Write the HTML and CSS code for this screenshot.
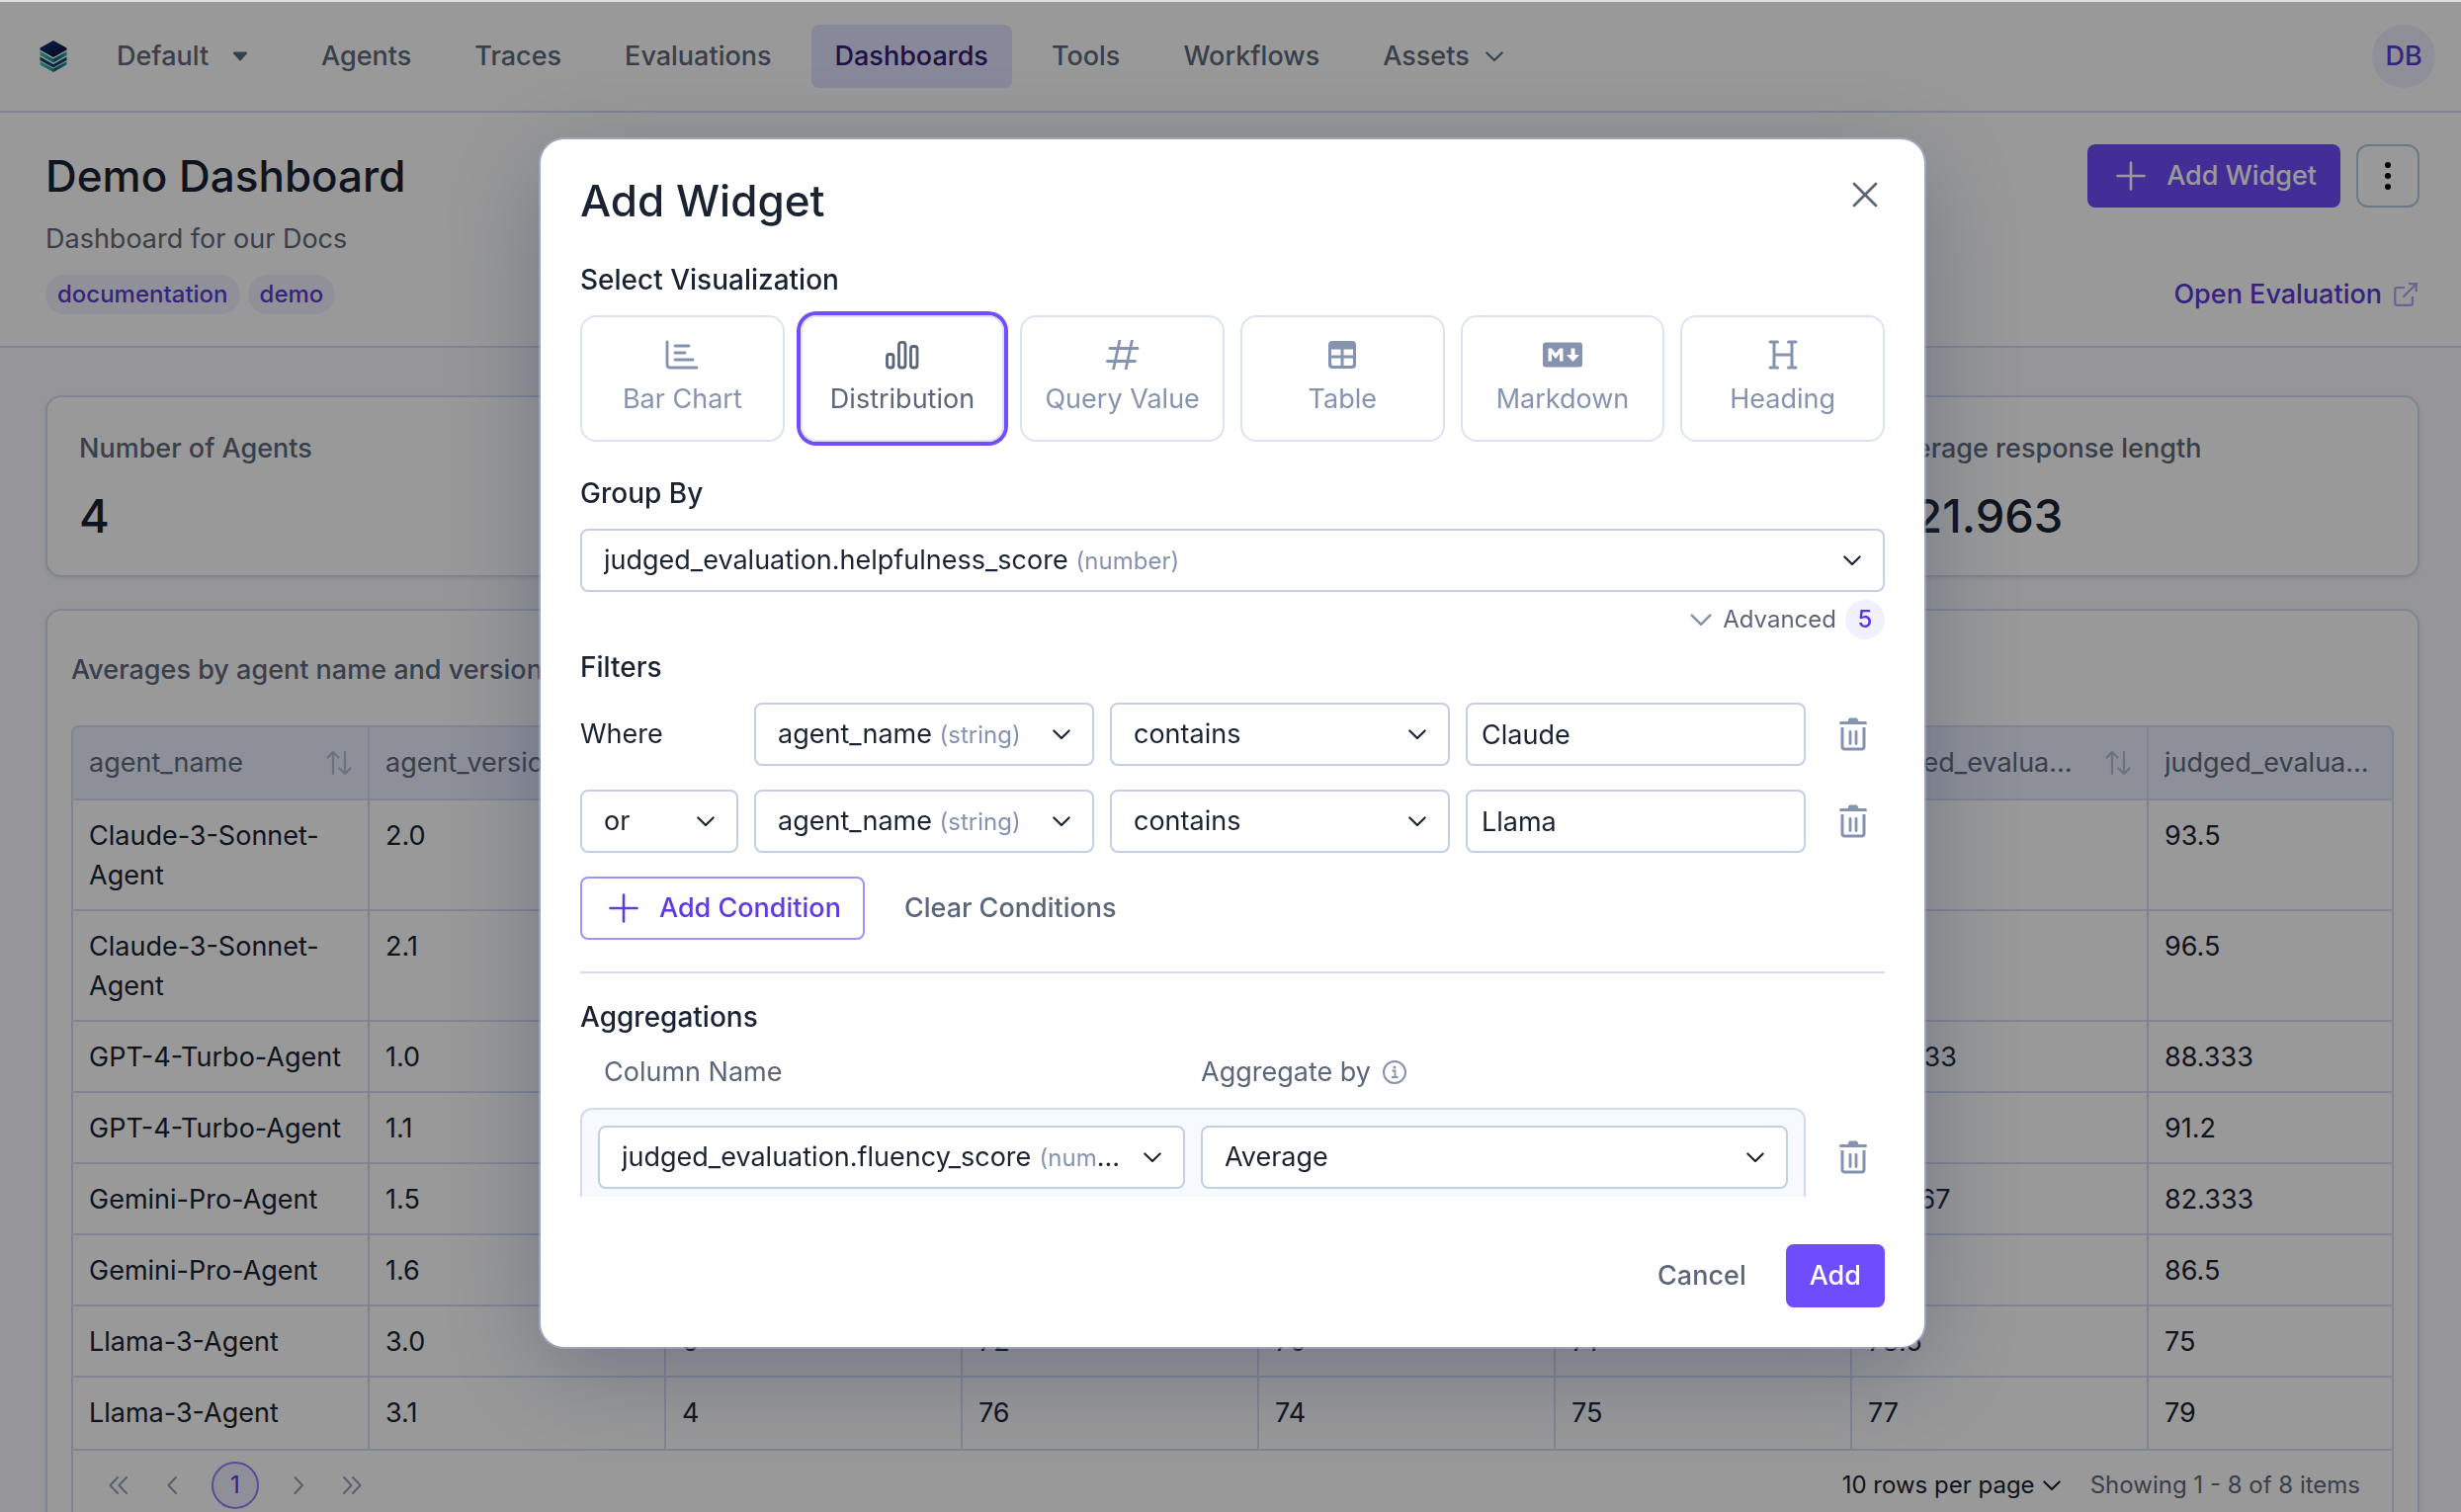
FILE: index.html
```html
<!DOCTYPE html>
<html lang="en">
<head>
<meta charset="utf-8">
<title>Demo Dashboard</title>
<link rel="stylesheet" href="styles.css">
</head>
<body>

<!-- icons -->
<svg class="sprite" aria-hidden="true">
	<symbol id="chevron" viewBox="0 0 20 12"><path d="M1.500 1.500 10 10l8.500-8.500" fill="none" stroke="currentColor" stroke-width="2.400" stroke-linecap="round" stroke-linejoin="round"/></symbol>
	<symbol id="plus" viewBox="0 0 32 32"><path d="M16 2.500v27M2.500 16h27" fill="none" stroke="currentColor" stroke-width="2.600" stroke-linecap="round"/></symbol>
	<symbol id="sort" viewBox="0 0 26 26"><path d="M7 24V2M1.500 7.500 7 2l5.500 5.500M19 2v22M13.500 18.500 19 24l5.500-5.500" fill="none" stroke="currentColor" stroke-width="2.200" stroke-linecap="round" stroke-linejoin="round"/></symbol>
	<symbol id="trash" viewBox="0 0 28 34">
		<path d="M1.500 5.500h25" fill="none" stroke="currentColor" stroke-width="3" stroke-linecap="round"/>
		<path d="M8 5.500 9.500 1.500Q10 .5 11 .5h6q1 0 1.500 1L20 5.500z" fill="currentColor"/>
		<path d="M3 10v19.500q0 2.500 2.500 2.500h17q2.500 0 2.500-2.500V10" fill="none" stroke="currentColor" stroke-width="3"/>
		<path d="M11 14.500v12M17 14.500v12" fill="none" stroke="currentColor" stroke-width="2.800" stroke-linecap="round"/>
	</symbol>
</svg>

<div class="app">
	<header class="topbar">
		<svg class="logo" viewBox="0 0 28 32">
			<defs>
				<linearGradient id="lg1" x1="0" y1="0" x2="1" y2="1"><stop offset="0" stop-color="#0b3a72"/><stop offset="1" stop-color="#06083f"/></linearGradient>
				<linearGradient id="lg2" x1="0" y1="0" x2="1" y2="0"><stop offset="0" stop-color="#3fc9a8"/><stop offset=".5" stop-color="#1f8f9c"/><stop offset=".55" stop-color="#0d5470"/><stop offset="1" stop-color="#1fae9c"/></linearGradient>
			</defs>
			<path d="M14 0 27.500 7.500v2L14 17 .5 9.500v-2z" fill="url(#lg1)"/>
			<path d="M.5 11 14 18.500 27.500 11v4L14 22.500.5 15z" fill="url(#lg2)"/>
			<path d="M.5 16.500 14 24l13.500-7.500v3.500L14 27.500.5 20z" fill="#0e3f63"/>
			<path d="M.5 21 14 28.500 27.500 21v3.500L14 32 .5 24.500z" fill="url(#lg2)"/>
		</svg>
		<button class="project" type="button">Default
			<svg class="caret" viewBox="0 0 16 10"><path d="M2 .5h12q1.800.2.800 1.800L9 9q-1 1-2 0L1.200 2.300Q.2.700 2 .5z" fill="currentColor"/></svg>
		</button>
		<nav class="nav">
			<a href="#agents">Agents</a>
			<a href="#traces">Traces</a>
			<a href="#evaluations">Evaluations</a>
			<a href="#dashboards" class="active">Dashboards</a>
			<a href="#tools">Tools</a>
			<a href="#workflows">Workflows</a>
			<a href="#assets">Assets <svg class="chev"><use href="#chevron"/></svg></a>
		</nav>
		<button class="avatar" type="button">DB</button>
	</header>

	<section class="head">
		<div class="head_info">
			<h1>Demo Dashboard</h1>
			<p>Dashboard for our Docs</p>
			<div class="tags"><span class="tag">documentation</span><span class="tag">demo</span></div>
		</div>
		<div class="head_actions">
			<div class="head_buttons">
				<button class="btn btn_primary" type="button"><svg class="plus"><use href="#plus"/></svg>Add Widget</button>
				<button class="btn_more" type="button" aria-label="More"><svg viewBox="0 0 6 28"><circle cx="3" cy="3" r="3"/><circle cx="3" cy="14" r="3"/><circle cx="3" cy="25" r="3"/></svg></button>
			</div>
			<a class="open" href="#evaluation">Open Evaluation
				<svg viewBox="0 0 24 24"><path d="M11 5H3.500Q1.200 5 1.200 7.300v13.200q0 2.300 2.300 2.300h13.200q2.300 0 2.300-2.300V14M9.500 14.500 22.500 1.500M15 1.200h7.800V9" fill="none" stroke="currentColor" stroke-width="2.200"/></svg>
			</a>
		</div>
	</section>

	<main class="board">
		<div class="stats">
			<div class="card stat"><h2>Number of Agents</h2><strong>4</strong></div>
			<div class="card stat"></div>
			<div class="card stat"></div>
			<div class="card stat"><h2>Average response length</h2><strong>421.963</strong></div>
		</div>
		<div class="card report">
			<h2>Averages by agent name and version</h2>
			<div class="grid">
				<table>
					<colgroup><col><col><col><col><col><col><col><col class="last"></colgroup>
					<thead>
						<tr>
							<th><div><span>agent_name</span><svg><use href="#sort"/></svg></div></th>
							<th><div><span>agent_version</span><svg><use href="#sort"/></svg></div></th>
							<th></th>
							<th></th>
							<th></th>
							<th></th>
							<th><div><span>judged_evaluation</span><svg><use href="#sort"/></svg></div></th>
							<th><div><span>judged_evaluation</span></div></th>
						</tr>
					</thead>
					<tbody>
						<tr><td>Claude-3-Sonnet-Agent</td><td>2.0</td><td></td><td></td><td></td><td></td><td></td><td>93.5</td></tr>
						<tr><td>Claude-3-Sonnet-Agent</td><td>2.1</td><td></td><td></td><td></td><td></td><td></td><td>96.5</td></tr>
						<tr><td>GPT-4-Turbo-Agent</td><td>1.0</td><td></td><td></td><td></td><td></td><td>83.333</td><td>88.333</td></tr>
						<tr><td>GPT-4-Turbo-Agent</td><td>1.1</td><td></td><td></td><td></td><td></td><td></td><td>91.2</td></tr>
						<tr><td>Gemini-Pro-Agent</td><td>1.5</td><td></td><td></td><td></td><td></td><td>81.667</td><td>82.333</td></tr>
						<tr><td>Gemini-Pro-Agent</td><td>1.6</td><td></td><td></td><td></td><td></td><td></td><td>86.5</td></tr>
						<tr><td>Llama-3-Agent</td><td>3.0</td><td>6</td><td>72</td><td>70</td><td>71</td><td>73.5</td><td>75</td></tr>
						<tr><td>Llama-3-Agent</td><td>3.1</td><td>4</td><td>76</td><td>74</td><td>75</td><td>77</td><td>79</td></tr>
					</tbody>
				</table>
				<div class="pager">
					<button type="button" aria-label="First page"><svg viewBox="0 0 20 18"><path d="M9 1 1.500 9 9 17M18 1l-7.500 8 7.500 8"/></svg></button>
					<button type="button" aria-label="Previous page"><svg viewBox="0 0 20 18"><path d="M14 1 6.500 9l7.500 8"/></svg></button>
					<button type="button" class="current">1</button>
					<button type="button" aria-label="Next page"><svg viewBox="0 0 20 18"><path d="m6.500 1 7.500 8-7.500 8"/></svg></button>
					<button type="button" aria-label="Last page"><svg viewBox="0 0 20 18"><path d="m2 1 7.500 8L2 17M11 1l7.500 8-7.500 8"/></svg></button>
					<label class="rows">
						<select aria-label="Rows per page"><option>10 rows per page</option></select>
						<svg class="chev"><use href="#chevron"/></svg>
					</label>
					<span class="showing">Showing 1 - 8 of 8 items</span>
				</div>
			</div>
		</div>
	</main>
</div>

<div class="overlay">
	<form class="modal" role="dialog" aria-labelledby="modal_title">
		<div class="modal_head">
			<h2 id="modal_title">Add Widget</h2>
			<button type="button" class="close" aria-label="Close"><svg viewBox="0 0 26 26"><path d="M2 2l22 22M24 2 2 24" fill="none" stroke="currentColor" stroke-width="2.800" stroke-linecap="round"/></svg></button>
		</div>

		<div class="modal_body">
			<h3>Select Visualization</h3>
			<div class="types">
				<button type="button" class="type">
					<svg viewBox="0 0 34 30"><path d="M2 2v23q0 3 3 3h27M10 6h14M10 13h10M10 20h18" fill="none" stroke="currentColor" stroke-width="2.800" stroke-linecap="round"/></svg>
					Bar Chart
				</button>
				<button type="button" class="type selected">
					<svg viewBox="0 0 34 30"><g fill="none" stroke="currentColor" stroke-width="2.800"><rect x="1.500" y="14.500" width="6.500" height="13.500" rx="2.500"/><rect x="13.500" y="2.300" width="6.500" height="25.700" rx="2.500"/><rect x="25.500" y="6.500" width="6.500" height="21.500" rx="2.500"/></g></svg>
					Distribution
				</button>
				<button type="button" class="type">
					<svg viewBox="0 0 34 30"><path d="M14 0 7.500 30M26.500 0 20 30M4 8.500h28M1.500 21.500h28" fill="none" stroke="currentColor" stroke-width="2.800" stroke-linecap="round"/></svg>
					Query Value
				</button>
				<button type="button" class="type">
					<svg viewBox="0 0 34 30"><path fill="currentColor" fill-rule="evenodd" d="M7 1h20q4 0 4 4v20q0 4-4 4H7q-4 0-4-4V5q0-4 4-4zM6 9.500v6h9.500v-6zM18.500 9.500v6H28v-6zM6 18.500V24q0 2 2 2h7.500v-7.500zM18.500 18.500V26H26q2 0 2-2v-5.500z"/></svg>
					Table
				</button>
				<button type="button" class="type">
					<svg class="md" viewBox="0 0 42 30"><path fill="currentColor" fill-rule="evenodd" d="M4 2.500h34q3 0 3 3v19q0 3-3 3H4q-3 0-3-3v-19q0-3 3-3zM6.500 8.500v13H10V14l4 5 4-5v7.500h3.500v-13H18l-4 5-4-5zM29.500 8.500V15H25l6.500 7 6.500-7h-4.500V8.500z"/></svg>
					Markdown
				</button>
				<button type="button" class="type">
					<svg viewBox="0 0 34 30"><path d="M8 2v26M26 2v26M8 15h18M4 2h7.500M22.500 2H30M4 28h7.500M22.500 28H30" fill="none" stroke="currentColor" stroke-width="3" stroke-linecap="round"/></svg>
					Heading
				</button>
			</div>

			<h3>Group By</h3>
			<label class="field">
				<span class="value"><select aria-label="Group by"><option>judged_evaluation.helpfulness_score</option></select> <small>(number)</small></span>
				<svg class="chev"><use href="#chevron"/></svg>
			</label>
			<button type="button" class="advanced"><svg><use href="#chevron"/></svg>Advanced<span>5</span></button>

			<h3 class="filters_title">Filters</h3>
			<div class="filter">
				<span class="where">Where</span>
				<label class="field"><span class="value"><select aria-label="Column"><option>agent_name</option></select> <small>(string)</small></span><svg class="chev"><use href="#chevron"/></svg></label>
				<label class="field"><span class="value"><select aria-label="Operator"><option>contains</option></select></span><svg class="chev"><use href="#chevron"/></svg></label>
				<input type="text" value="Claude" aria-label="Value">
				<button type="button" class="trash" aria-label="Remove"><svg><use href="#trash"/></svg></button>
			</div>
			<div class="filter">
				<label class="field"><span class="value"><select aria-label="Join"><option>or</option></select></span><svg class="chev"><use href="#chevron"/></svg></label>
				<label class="field"><span class="value"><select aria-label="Column"><option>agent_name</option></select> <small>(string)</small></span><svg class="chev"><use href="#chevron"/></svg></label>
				<label class="field"><span class="value"><select aria-label="Operator"><option>contains</option></select></span><svg class="chev"><use href="#chevron"/></svg></label>
				<input type="text" value="Llama" aria-label="Value">
				<button type="button" class="trash" aria-label="Remove"><svg><use href="#trash"/></svg></button>
			</div>
			<div class="conditions">
				<button class="btn btn_outline" type="button"><svg class="plus"><use href="#plus"/></svg>Add Condition</button>
				<button class="btn btn_text" type="button">Clear Conditions</button>
			</div>

			<hr>

			<h3>Aggregations</h3>
			<div class="agg_labels">
				<span>Column Name</span>
				<span>Aggregate by
					<svg viewBox="0 0 24 24"><circle cx="12" cy="12" r="11" fill="none" stroke="currentColor" stroke-width="2"/><path d="M9.500 10.500H12.500V17M9 17h6.500" fill="none" stroke="currentColor" stroke-width="1.800"/><circle cx="12" cy="7" r="1.500" fill="currentColor"/></svg>
				</span>
			</div>
			<div class="agg">
				<div class="agg_box">
					<label class="field"><span class="value"><select aria-label="Column name"><option>judged_evaluation.fluency_score</option></select> <small>(number)</small></span><svg class="chev"><use href="#chevron"/></svg></label>
					<label class="field"><span class="value"><select aria-label="Aggregate by"><option>Average</option></select></span><svg class="chev"><use href="#chevron"/></svg></label>
				</div>
				<button type="button" class="trash" aria-label="Remove"><svg><use href="#trash"/></svg></button>
			</div>
		</div>

		<div class="modal_foot">
			<button class="btn btn_text" type="button">Cancel</button>
			<button class="btn btn_primary" type="submit">Add</button>
		</div>
	</form>
</div>

</body>
</html>
```
FILE: styles.css
```css
* {
	box-sizing: border-box;
}
body {
	margin: 0;
	height: 100vh;
	overflow: hidden;
	background: #fafafd;
	color: #1a2332;
	font-family: Inter, "Liberation Sans", sans-serif;
	font-size: 27px;
	line-height: 40px;
}
h1, h2, h3, p {
	margin: 0;
	font-weight: 500;
}
button, input, select {
	font: inherit;
	color: inherit;
	margin: 0;
}
button {
	border: 0;
	padding: 0;
	background: none;
	cursor: pointer;
}
a {
	color: inherit;
	text-decoration: none;
}
svg {
	display: block;
	flex: none;
}
select {
	appearance: none;
	border: 0;
	padding: 0;
	background: none;
	outline: 0;
}
.sprite {
	position: absolute;
	width: 0;
	height: 0;
}
.chev {
	width: 18px;
	height: 11px;
}
.plus {
	width: 32px;
	height: 32px;
	margin: 0 -4px 0 4px;
}

/* top bar */
.app {
	height: 100vh;
	overflow: hidden;
	border-top: 2px solid #dedede;
}
.topbar {
	display: flex;
	align-items: center;
	height: 112px;
	padding: 0 26px 0 40px;
	background: #fff;
	border-bottom: 2px solid #d4def2;
	color: #5f6a7d;
	font-weight: 500;
}
.logo {
	width: 28px;
	height: 32px;
}
.project {
	display: flex;
	align-items: center;
	gap: 24px;
	margin-left: 50px;
	font-weight: 500;
}
.caret {
	width: 16px;
	height: 10px;
}
.nav {
	display: flex;
	gap: 16px;
	margin-left: 50px;
}
.nav a {
	display: flex;
	align-items: center;
	gap: 16px;
	height: 64px;
	padding: 0 24px;
	border-radius: 8px;
}
.nav .active {
	background: #e1e3ff;
	color: #302075;
}
.avatar {
	width: 64px;
	height: 64px;
	margin-left: auto;
	border-radius: 50%;
	background: #eeeeff;
	color: #5a3bd6;
	font-weight: 500;
}

/* dashboard heading */
.head {
	display: flex;
	justify-content: space-between;
	padding: 32px 42px 32px 46px;
	background: #fff;
	border-bottom: 2px solid #d4def2;
}
h1 {
	font-size: 44px;
	line-height: 64px;
}
.head p {
	margin-top: 12px;
	color: #5f6a7d;
	font-weight: 400;
}
.tags {
	display: flex;
	gap: 8px;
	margin-top: 16px;
}
.tag {
	padding: 0 12px;
	border-radius: 20px;
	background: #f1f1ff;
	color: #5a3bd6;
	font-size: 24px;
	font-weight: 500;
}
.head_actions {
	display: flex;
	flex-direction: column;
	align-items: flex-end;
	justify-content: space-between;
}
.head_buttons {
	display: flex;
	gap: 16px;
}
.btn {
	display: flex;
	align-items: center;
	gap: 24px;
	height: 64px;
	padding: 0 24px;
	border-radius: 8px;
	font-weight: 500;
}
.btn_primary {
	background: #704dfc;
	color: #fff;
}
.btn_more {
	display: flex;
	align-items: center;
	justify-content: center;
	width: 64px;
	height: 64px;
	border: 2px solid #b8c8e4;
	border-radius: 12px;
}
.btn_more svg {
	width: 6px;
	height: 28px;
}
.open {
	display: flex;
	align-items: center;
	gap: 12px;
	padding-right: 2px;
	color: #5a3bd6;
	font-weight: 500;
}
.open svg {
	width: 24px;
	height: 24px;
	color: #b0a8f5;
}

/* widgets */
.board {
	display: flex;
	flex-direction: column;
	gap: 32px;
	padding: 48px 42px 48px 46px;
}
.stats {
	display: grid;
	grid-template-columns: repeat(4, 1fr);
	gap: 32px;
}
.card {
	background: #fff;
	border: 2px solid #d4def2;
	border-radius: 16px;
	box-shadow: 0 2px 4px rgba(20, 30, 60, .08);
}
.card h2 {
	color: #5f6a7d;
	font-size: 27px;
}
.stat {
	height: 184px;
	padding: 32px;
}
.stat strong {
	display: block;
	margin-top: 16px;
	font-size: 47px;
	line-height: 64px;
	font-weight: 500;
}
.report {
	padding: 40px 24px 24px;
}
.grid {
	margin-top: 36px;
	border: 2px solid #d4def2;
	border-radius: 8px;
	overflow: hidden;
}
table {
	width: 100%;
	table-layout: fixed;
	border-collapse: separate;
	border-spacing: 0;
}
col {
	width: 300px;
}
.last {
	width: auto;
}
th, td {
	height: 72px;
	padding: 16px 16px 14px;
	border-bottom: 2px solid #d4def2;
	border-right: 2px solid #d4def2;
	text-align: left;
	vertical-align: top;
	font-weight: 400;
}
th:last-child, td:last-child {
	border-right: 0;
}
th {
	background: #ebf0fd;
	color: #5f6a7d;
}
th div {
	display: flex;
	align-items: center;
	justify-content: space-between;
	gap: 28px;
}
th span {
	overflow: hidden;
	text-overflow: ellipsis;
	white-space: nowrap;
}
th svg {
	width: 26px;
	height: 26px;
	color: #b4bfd3;
}
th, tr:last-child td {
	padding-bottom: 16px;
}
.pager {
	display: flex;
	align-items: center;
	gap: 6px;
	height: 70px;
	padding: 0 32px 0 22px;
	font-size: 24px;
}
.pager button {
	display: flex;
	align-items: center;
	justify-content: center;
	width: 48px;
	height: 48px;
	border-radius: 50%;
}
.pager button svg {
	width: 20px;
	height: 18px;
	fill: none;
	stroke: #93a0b8;
	stroke-width: 2;
	stroke-linecap: round;
	stroke-linejoin: round;
}
.pager .current {
	margin: 0 10px;
	border: 2px solid #8f83f7;
	background: #eeeeff;
	color: #5a3bd6;
}
.rows {
	display: flex;
	align-items: center;
	gap: 8px;
	margin-left: auto;
}
.showing {
	margin-left: 24px;
	color: #5f6a7d;
}

/* modal */
.overlay {
	position: fixed;
	inset: 2px 0 0;
	display: flex;
	align-items: center;
	justify-content: center;
	padding: 0 0 28px 4px;
	background: rgba(0, 0, 0, .4);
}
.modal {
	display: flex;
	flex-direction: column;
	width: 1400px;
	max-width: 90%;
	height: calc(80vh - 2px);
	padding: 32px 40px 40px;
	border-radius: 24px;
	background: #fff;
	box-shadow: 0 0 0 2px rgba(170, 180, 215, .6), 0 24px 100px rgba(40, 52, 90, .36);
}
.modal_head {
	display: flex;
	align-items: flex-start;
	justify-content: space-between;
}
.modal_head h2 {
	font-size: 44px;
	line-height: 60px;
}
.close {
	padding: 11px 7px;
	color: #5b667a;
}
.close svg {
	width: 26px;
	height: 26px;
}
/* room round the scroller for the ring of the selected card */
.modal_body {
	flex: 1;
	min-height: 0;
	overflow: hidden;
	margin: 0 -8px;
	padding: 30px 8px 0;
}
h3 {
	font-size: 28px;
}
.types {
	display: grid;
	grid-template-columns: repeat(6, 1fr);
	gap: 16px;
	margin: 16px 0 32px;
}
.type {
	display: flex;
	flex-direction: column;
	align-items: center;
	gap: 10px;
	height: 128px;
	padding-top: 23px;
	border: 2px solid #dbe3f3;
	border-radius: 16px;
	color: #8592b0;
}
.type svg {
	width: 34px;
	height: 30px;
}
.type .md {
	width: 42px;
}
.selected {
	color: #5b667a;
	box-shadow: 0 0 0 4px #714dfc;
}
.field {
	display: flex;
	align-items: center;
	justify-content: space-between;
	gap: 16px;
	min-width: 0;
	height: 64px;
	padding: 0 22px;
	border: 2px solid #c3cfe5;
	border-radius: 8px;
	background: #fff;
}
.types + h3 + .field {
	margin-top: 16px;
}
.value {
	min-width: 0;
	overflow: hidden;
	text-overflow: ellipsis;
	white-space: nowrap;
}
small {
	color: #8592b0;
	font-size: 24px;
}
.advanced {
	display: flex;
	align-items: center;
	gap: 9px;
	margin: 8px 0 8px auto;
	color: #5b667a;
	font-size: 24px;
}
.advanced svg {
	width: 22px;
	height: 13px;
	margin-right: 2px;
	color: #8592b0;
}
.advanced span {
	width: 40px;
	border-radius: 50%;
	background: #f0f0ff;
	color: #5a35dd;
	font-weight: 500;
}
.filters_title {
	margin-bottom: 16px;
}
.filter {
	display: grid;
	grid-template-columns: 160px 1fr 1fr 1fr 64px;
	gap: 16px;
	align-items: center;
	margin-bottom: 24px;
}
input {
	width: 100%;
	min-width: 0;
	height: 64px;
	padding: 0 14px;
	border: 2px solid #c3cfe5;
	border-radius: 8px;
	background: #fff;
}
.trash {
	display: flex;
	align-items: center;
	justify-content: center;
	width: 64px;
	height: 64px;
	color: #8592b0;
}
.trash svg {
	width: 28px;
	height: 34px;
}
.conditions {
	display: flex;
	gap: 16px;
}
.btn_outline {
	padding: 0 22px;
	border: 2px solid #9b94fb;
	color: #5f3be0;
}
.btn_text {
	color: #5b667a;
}
hr {
	height: 2px;
	margin: 32px 0 24px;
	border: 0;
	background: #d0dbee;
}
.agg_labels {
	display: grid;
	grid-template-columns: 1fr 1fr;
	gap: 16px;
	margin: 16px 104px 16px 24px;
	color: #5b667a;
}
.agg_labels span {
	display: flex;
	align-items: center;
	gap: 12px;
}
.agg_labels svg {
	width: 24px;
	height: 24px;
	color: #8592b0;
}
.agg {
	display: flex;
	align-items: flex-start;
	gap: 16px;
}
.agg_box {
	flex: 1;
	min-width: 0;
	display: grid;
	grid-template-columns: 1fr 1fr;
	gap: 16px;
	height: 160px;
	padding: 16px;
	border: 2px solid #d0dbee;
	border-radius: 12px;
	background: #f6faff;
}
.agg .trash {
	margin-top: 18px;
}
.modal_foot {
	display: flex;
	justify-content: flex-end;
	gap: 16px;
	padding-top: 48px;
}
```
